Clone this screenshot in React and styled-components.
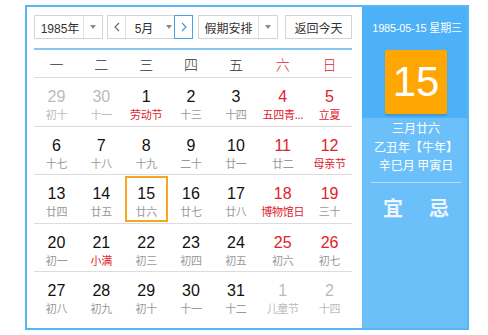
import React from "react";
import styled, { createGlobalStyle } from "styled-components";

const GlobalStyle = createGlobalStyle`
  html, body { margin: 0; padding: 0; background: #fff; }
  body { font-family: "Liberation Sans", "Noto Sans CJK SC", sans-serif; }
  * { box-sizing: border-box; }
`;

const Frame = styled.div`
  margin: 5px 0 0 25px;
  width: 444px;
  height: 325px;
  border: 2px solid #57b6f6;
  display: flex;
  background: #fff;
`;

const Main = styled.div`
  width: 335px;
  padding: 8px 10px 0 7px;
  display: flex;
  flex-direction: column;
`;

const Toolbar = styled.div`
  display: flex;
  align-items: center;
  height: 24px;
`;

const SelectBox = styled.div`
  display: flex;
  height: 24px;
  border: 1px solid #d4d4d4;
  background: #fff;
  margin-left: ${(p) => p.$ml || 0}px;
  color: #333;
  font-family: "Liberation Sans", "Noto Sans CJK SC", sans-serif;
  font-size: 12px;
`;

const SelectText = styled.div`
  width: ${(p) => p.$w}px;
  display: flex;
  align-items: center;
  justify-content: center;
  padding-left: ${(p) => p.$pl || 0}px;
`;

const Arrow = styled.div`
  width: ${(p) => p.$w || 20}px;
  border-left: ${(p) => (p.$line ? "1px solid #e2e2e2" : "none")};
  display: flex;
  align-items: center;
  justify-content: center;
  &::after {
    content: "";
    border-left: 3px solid transparent;
    border-right: 3px solid transparent;
    border-top: 4px solid #8a8a8a;
  }
`;

const NavBtn = styled.div`
  width: ${(p) => p.$w}px;
  display: flex;
  align-items: center;
  justify-content: center;
  border-right: ${(p) => (p.$br ? "1px solid #e2e2e2" : "none")};
  outline: ${(p) => (p.$blue ? "1px solid #4aa3e6" : "none")};
  height: 100%;
`;

const Button = styled.div`
  margin-left: 7px;
  width: 67px;
  height: 24px;
  border: 1px solid #d4d4d4;
  display: flex;
  align-items: center;
  justify-content: center;
  font-size: 12px;
  color: #333;
  font-family: "Noto Sans CJK SC", sans-serif;
`;

const Grid = styled.div`
  margin-top: 9px;
  border-top: 2px solid #86c6f2;
  display: grid;
  grid-template-columns: repeat(7, 1fr);
`;

const Head = styled.div`
  height: 28px;
  display: flex;
  align-items: center;
  justify-content: center;
  font-family: "Noto Sans CJK SC", sans-serif;
  font-size: 14px;
  font-weight: 300;
  color: ${(p) => (p.$red ? "#e0222c" : "#333")};
  border-bottom: 1px solid #dcdcdc;
`;

const Cell = styled.div`
  height: 48.5px;
  border-bottom: ${(p) => (p.$last ? "none" : "1px solid #dcdcdc")};
  padding: 1px 1px 0;
`;

const CellInner = styled.div`
  height: 46px;
  border: 2px solid ${(p) => (p.$today ? "#f6a623" : "transparent")};
  display: flex;
  flex-direction: column;
  align-items: center;
  padding-top: 7px;
`;

const Num = styled.div`
  font-family: "Liberation Sans", sans-serif;
  font-size: 16px;
  line-height: 18px;
  color: ${(p) => p.$c};
`;

const Lunar = styled.div`
  font-family: "Noto Sans CJK SC", sans-serif;
  font-size: 11px;
  line-height: 16px;
  color: ${(p) => p.$c};
  white-space: nowrap;
  letter-spacing: -0.3px;
`;

const Side = styled.div`
  flex: 1;
  display: flex;
  flex-direction: column;
  background: #6cc0fa;
  color: #fff;
`;

const SideTop = styled.div`
  background: #4cb1f6;
  height: 111px;
  display: flex;
  flex-direction: column;
  align-items: center;
  padding-top: 11px;
  padding-left: 3px;
`;

const DateLine = styled.div`
  font-size: 11px;
  line-height: 20px;
  letter-spacing: -0.2px;
  font-family: "Liberation Sans", "Noto Sans CJK SC", sans-serif;
  white-space: nowrap;
  padding-left: 2px;
`;

const BigDay = styled.div`
  margin-top: 12px;
  width: 62px;
  height: 64px;
  background: #ffa602;
  border-radius: 2px;
  box-shadow: 0 2px 2px rgba(0, 0, 0, 0.15);
  display: flex;
  align-items: center;
  justify-content: center;
  font-family: "Liberation Sans", sans-serif;
  font-size: 42px;
  color: #fff;
`;

const LunarInfo = styled.div`
  padding-top: 1px;
  padding-left: 3px;
  display: flex;
  flex-direction: column;
  align-items: center;
  font-family: "Noto Sans CJK SC", sans-serif;
  font-size: 12px;
  line-height: 18.5px;
  white-space: nowrap;
`;

const Divider = styled.div`
  margin: 7px 6px 0 9px;
  height: 1px;
  background: rgba(255, 255, 255, 0.5);
`;

const YiJi = styled.div`
  margin-top: 13px;
  padding-left: 3px;
  display: flex;
  justify-content: center;
  gap: 26px;
  font-family: "Noto Sans CJK SC", sans-serif;
  font-size: 20px;
  font-weight: bold;
  line-height: 24px;
  color: #eef7ff;
`;

const Chevron = ({ dir, color }) => (
  <svg width="6" height="10" viewBox="0 0 6 10">
    <polyline
      points={dir === "left" ? "5,1 1,5 5,9" : "1,1 5,5 1,9"}
      fill="none"
      stroke={color}
      strokeWidth="1.1"
    />
  </svg>
);

const BLACK = "#111";
const RED = "#e0222c";
const GRAY = "#999";
const LIGHT = "#bbb";

const days = [
  [29, "初十", LIGHT, LIGHT],
  [30, "十一", LIGHT, LIGHT],
  [1, "劳动节", BLACK, RED],
  [2, "十三", BLACK, GRAY],
  [3, "十四", BLACK, GRAY],
  [4, "五四青...", RED, RED],
  [5, "立夏", RED, RED],
  [6, "十七", BLACK, GRAY],
  [7, "十八", BLACK, GRAY],
  [8, "十九", BLACK, GRAY],
  [9, "二十", BLACK, GRAY],
  [10, "廿一", BLACK, GRAY],
  [11, "廿二", RED, GRAY],
  [12, "母亲节", RED, RED],
  [13, "廿四", BLACK, GRAY],
  [14, "廿五", BLACK, GRAY],
  [15, "廿六", BLACK, GRAY, true],
  [16, "廿七", BLACK, GRAY],
  [17, "廿八", BLACK, GRAY],
  [18, "博物馆日", RED, RED],
  [19, "三十", RED, GRAY],
  [20, "初一", BLACK, GRAY],
  [21, "小满", BLACK, RED],
  [22, "初三", BLACK, GRAY],
  [23, "初四", BLACK, GRAY],
  [24, "初五", BLACK, GRAY],
  [25, "初六", RED, GRAY],
  [26, "初七", RED, GRAY],
  [27, "初八", BLACK, GRAY],
  [28, "初九", BLACK, GRAY],
  [29, "初十", BLACK, GRAY],
  [30, "十一", BLACK, GRAY],
  [31, "十二", BLACK, GRAY],
  [1, "儿童节", LIGHT, LIGHT],
  [2, "十四", LIGHT, LIGHT],
];

const weekdays = ["一", "二", "三", "四", "五", "六", "日"];

export default function App() {
  return (
    <>
      <GlobalStyle />
      <Frame>
        <Main>
          <Toolbar>
            <SelectBox>
              <SelectText $w={48} $pl={2}>1985年</SelectText>
              <Arrow $line $w={19} />
            </SelectBox>
            <SelectBox $ml={4}>
              <NavBtn $w={18} $br>
                <Chevron dir="left" color="#666" />
              </NavBtn>
              <SelectText $w={36}>5月</SelectText>
              <Arrow $w={13} />
              <NavBtn $w={17} $blue>
                <Chevron dir="right" color="#3d95db" />
              </NavBtn>
            </SelectBox>
            <SelectBox $ml={5}>
              <SelectText $w={59}>假期安排</SelectText>
              <Arrow $line $w={19} />
            </SelectBox>
            <Button>返回今天</Button>
          </Toolbar>
          <Grid>
            {weekdays.map((w, i) => (
              <Head key={w} $red={i >= 5}>
                {w}
              </Head>
            ))}
            {days.map(([n, l, nc, lc, today], i) => (
              <Cell key={i} $last={i >= 28}>
                <CellInner $today={today}>
                  <Num $c={nc}>{n}</Num>
                  <Lunar $c={lc}>{l}</Lunar>
                </CellInner>
              </Cell>
            ))}
          </Grid>
        </Main>
        <Side>
          <SideTop>
            <DateLine>1985-05-15 星期三</DateLine>
            <BigDay>15</BigDay>
          </SideTop>
          <LunarInfo>
            <div>三月廿六</div>
            <div>乙丑年【牛年】</div>
            <div>辛巳月 甲寅日</div>
          </LunarInfo>
          <Divider />
          <YiJi>
            <span>宜</span>
            <span>忌</span>
          </YiJi>
        </Side>
      </Frame>
    </>
  );
}
